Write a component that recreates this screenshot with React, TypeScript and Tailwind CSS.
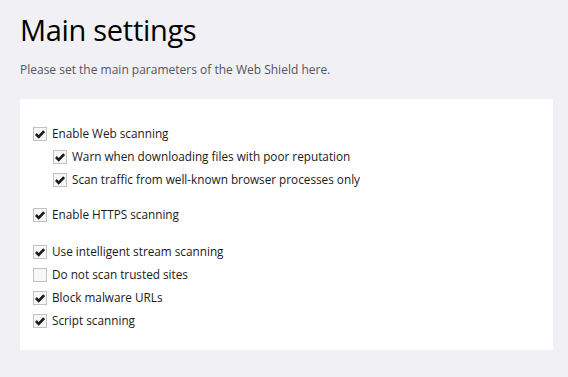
import React from 'react';

type Item = { label: string; checked: boolean; sub?: boolean };

const groups: { items: Item[]; mt: string }[] = [
  {
    mt: 'mt-0',
    items: [
      { label: 'Enable Web scanning', checked: true },
      { label: 'Warn when downloading files with poor reputation', checked: true, sub: true },
      { label: 'Scan traffic from well-known browser processes only', checked: true, sub: true },
    ],
  },
  { mt: 'mt-[12px]', items: [{ label: 'Enable HTTPS scanning', checked: true }] },
  {
    mt: 'mt-[14px]',
    items: [
      { label: 'Use intelligent stream scanning', checked: true },
      { label: 'Do not scan trusted sites', checked: false },
      { label: 'Block malware URLs', checked: true },
      { label: 'Script scanning', checked: true },
    ],
  },
];

function CheckBox({ checked }: { checked: boolean }) {
  return (
    <span className="w-[14px] h-[14px] border border-[#c2c2c2] bg-[#f7f7f7] flex items-center justify-center shrink-0">
      {checked && (
        <svg width="10" height="10" viewBox="0 0 10 10">
          <path d="M0.9 5 L3.7 7.8 L9.1 2.2" fill="none" stroke="#1a1a1a" strokeWidth="2.6" />
        </svg>
      )}
    </span>
  );
}

export default function App() {
  return (
    <div
      className="w-[568px] h-[377px] bg-[#f0f0f5] pl-[20px] pr-[15px] overflow-hidden"
      style={{ fontFamily: '"Open Sans", "Noto Sans", sans-serif' }}
    >
      <h1 className="text-[29px] leading-none text-black pt-[15px] tracking-[-0.3px]">Main settings</h1>
      <p className="text-[12px] text-[#555560] mt-[20px] leading-none">
        Please set the main parameters of the Web Shield here.
      </p>
      <div className="bg-white mt-[23px] h-[251px] pt-[23px] pl-[13px]">
        {groups.map((g, gi) => (
          <div key={gi} className={g.mt}>
            {g.items.map((it) => (
              <label
                key={it.label}
                className={`h-[23px] flex items-center gap-[5px] text-[11.75px] text-[#1a1a1a] ${it.sub ? 'pl-[20px]' : ''}`}
              >
                <CheckBox checked={it.checked} />
                <span>{it.label}</span>
              </label>
            ))}
          </div>
        ))}
      </div>
    </div>
  );
}
